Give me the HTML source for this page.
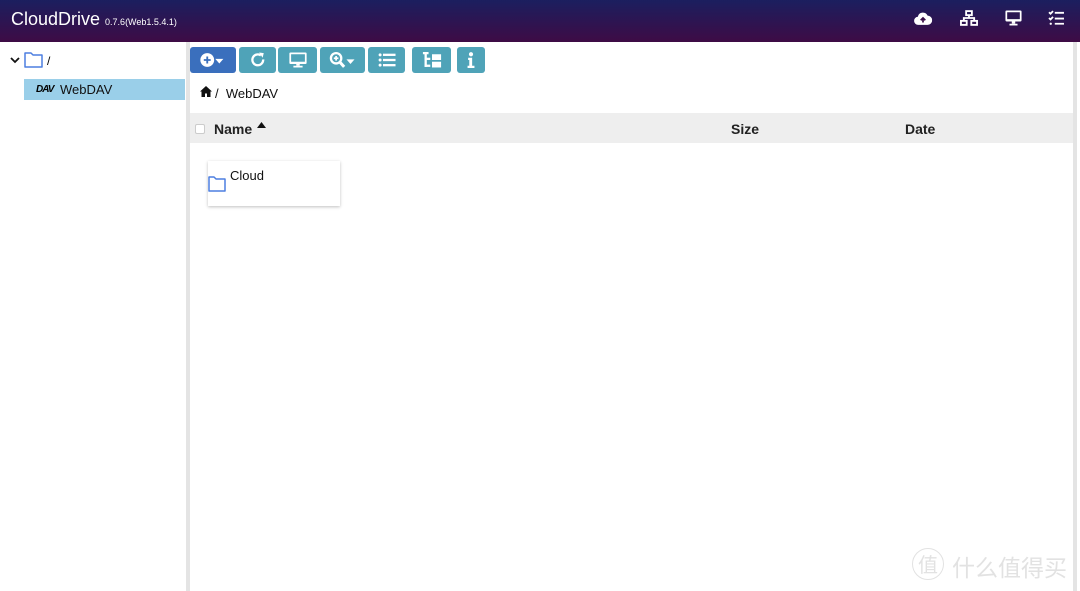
<!DOCTYPE html>
<html><head><meta charset="utf-8"><style>
*{margin:0;padding:0;box-sizing:border-box}
body{width:1080px;height:591px;overflow:hidden;background:#fff;font-family:"Liberation Sans",Arial,sans-serif;position:relative}
.hdr{position:absolute;left:0;top:0;width:1080px;height:42px;background:linear-gradient(#1b1f5f,#3e0b45)}
.title{position:absolute;left:11px;top:9px;color:#fff;font-size:18px}
.title small{font-size:9px}
.side{position:absolute;left:0;top:42px;width:187px;height:549px;background:#fff}
.vline{position:absolute;left:186px;top:42px;width:4px;height:549px;background:#e4e4e4}
.rline{position:absolute;left:1073px;top:42px;width:4px;height:549px;background:#e4e4e4}
.btn{position:absolute;top:47px;height:26px;border-radius:3px;background:#4fa3b8}
.btn svg{position:absolute;left:50%;top:50%;transform:translate(-50%,-50%) scale(1.15)}
.sel{position:absolute;left:24px;top:79px;width:161px;height:21px;background:#9acfe9}
.th{position:absolute;left:190px;top:113px;width:883px;height:30px;background:#eeeeee;font-weight:bold;font-size:14px;color:#222}
.th span{position:absolute;top:8px}
.card{position:absolute;left:208px;top:161px;width:132px;height:45px;background:#fff;box-shadow:0 1px 3px rgba(0,0,0,.25)}
.hi{position:absolute;transform:scale(1.15);transform-origin:center}
</style></head><body>
<div class="hdr">
<div class="title">CloudDrive <small>0.7.6(Web1.5.4.1)</small></div>
<svg class="hi" style="left:915px;top:12px" width="16" height="13" viewBox="0 0 16 13"><path d="M4 12a3.5 3.5 0 0 1-.5-7A4.5 4.5 0 0 1 12 4a3.5 3.5 0 0 1 0 8z" fill="#fff"/><path d="M8 10V6M6 8l2-2 2 2" stroke="#3a1048" stroke-width="1.5" fill="none"/></svg>
<svg class="hi" style="left:961px;top:11px" width="16" height="14" viewBox="0 0 16 14" fill="none" stroke="#fff" stroke-width="1.6"><rect x="5.5" y="1" width="5" height="3.5"/><rect x="1" y="9.5" width="5" height="3.5"/><rect x="10" y="9.5" width="5" height="3.5"/><path d="M8 4.5v2.5M3.5 9.5V7h9v2.5"/></svg>
<svg class="hi" style="left:1006px;top:11px" width="15" height="14" viewBox="0 0 15 14"><rect x="0.5" y="0.5" width="14" height="9.5" rx="1" fill="#fff"/><rect x="2" y="2" width="11" height="6" fill="#2a1550"/><rect x="6" y="10" width="3" height="2" fill="#fff"/><rect x="4" y="12" width="7" height="1.5" fill="#fff"/></svg>
<svg class="hi" style="left:1049px;top:11px" width="15" height="14" viewBox="0 0 15 14" stroke="#fff" stroke-width="1.6" fill="none"><path d="M1 2l1.3 1.3L4.5 1M1 7l1.3 1.3L4.5 6"/><circle cx="2.5" cy="12" r="1" fill="#fff" stroke="none"/><path d="M6 2.5h8M6 7.5h8M6 12h8"/></svg>
</div>
<div class="side"></div>
<div class="vline"></div><div class="rline"></div>
<svg style="position:absolute;left:10px;top:56px" width="10" height="8" viewBox="0 0 10 8"><path d="M1 2l4 4 4-4" stroke="#111" stroke-width="1.8" fill="none"/></svg>
<svg style="position:absolute;left:24px;top:51px" width="19" height="17" viewBox="0 0 19 17"><path d="M1 2h6l2 2h9v12H1z" fill="none" stroke="#4d7fe0" stroke-width="1.5" stroke-linejoin="round"/></svg>
<div style="position:absolute;left:47px;top:54px;font-size:12px">/</div>
<div class="sel"></div>
<div style="position:absolute;left:36px;top:84px;font-size:10px;font-weight:bold;font-style:italic;letter-spacing:-1px">DAV</div>
<div style="position:absolute;left:60px;top:82px;font-size:13px;color:#111">WebDAV</div>

<div class="btn" style="left:190px;width:46px;background:#3a6fbd"><svg width="24" height="14" viewBox="0 0 24 14"><circle cx="7" cy="7" r="6" fill="#fff"/><path d="M7 4v6M4 7h6" stroke="#3a6fbd" stroke-width="1.6"/><path d="M14 6h7l-3.5 4z" fill="#fff"/></svg></div>
<div class="btn" style="left:239px;width:37px"><svg width="14" height="14" viewBox="0 0 14 14"><path d="M11.5 6.5A4.7 4.7 0 1 1 9.5 3" stroke="#fff" stroke-width="2" fill="none"/><path d="M8 0.5l4 .5-1 4z" fill="#fff"/></svg></div>
<div class="btn" style="left:278px;width:39px"><svg width="16" height="14" viewBox="0 0 16 14"><rect x="0.5" y="0.5" width="15" height="10" rx="1" fill="#fff"/><rect x="2" y="2" width="12" height="6.5" fill="#4fa3b8"/><rect x="6.5" y="10" width="3" height="2" fill="#fff"/><rect x="4" y="12" width="8" height="1.5" fill="#fff"/></svg></div>
<div class="btn" style="left:320px;width:45px"><svg width="24" height="15" viewBox="0 0 24 15"><circle cx="6" cy="6" r="4.5" fill="none" stroke="#fff" stroke-width="2"/><path d="M6 4v4M4 6h4" stroke="#fff" stroke-width="1.5"/><path d="M9 9l4 4.5" stroke="#fff" stroke-width="2.6"/><path d="M15 7h7l-3.5 4z" fill="#fff"/></svg></div>
<div class="btn" style="left:368px;width:37px"><svg width="15" height="12" viewBox="0 0 15 12" fill="#fff"><circle cx="1.5" cy="1.5" r="1.3"/><circle cx="1.5" cy="6" r="1.3"/><circle cx="1.5" cy="10.5" r="1.3"/><rect x="4" y="0.5" width="11" height="2"/><rect x="4" y="5" width="11" height="2"/><rect x="4" y="9.5" width="11" height="2"/></svg></div>
<div class="btn" style="left:412px;width:39px"><svg width="16" height="14" viewBox="0 0 16 14" fill="#fff"><rect x="0" y="0" width="5" height="2"/><rect x="1.5" y="0" width="2" height="13"/><rect x="1.5" y="5" width="5" height="2"/><rect x="1.5" y="11" width="5" height="2"/><rect x="8" y="2" width="8" height="5"/><rect x="8" y="8.5" width="8" height="5"/></svg></div>
<div class="btn" style="left:457px;width:28px"><svg width="6" height="14" viewBox="0 0 6 14" fill="#fff"><circle cx="3" cy="2" r="1.8"/><path d="M0.5 5h3.5v7H6v2H0v-2h1.5V7h-1z"/></svg></div>

<svg style="position:absolute;left:200px;top:86px" width="12" height="11" viewBox="0 0 12 11"><path d="M6 0L0 5.5h1.5V11h3.5V7.5h2V11h3.5V5.5H12z" fill="#111"/></svg>
<div style="position:absolute;left:215px;top:86px;font-size:13px;color:#111">/ &nbsp;WebDAV</div>

<div class="th">
<div style="position:absolute;left:5px;top:11px;width:10px;height:10px;border:1px solid #ccc;border-radius:2px;background:#fff"></div>
<span style="left:24px">Name</span>
<svg style="position:absolute;left:67px;top:9px" width="9" height="6" viewBox="0 0 9 6"><path d="M0 6L4.5 0 9 6z" fill="#111"/></svg>
<span style="left:541px">Size</span><span style="left:715px">Date</span>
</div>
<div class="card">
<svg style="position:absolute;left:0;top:14px" width="18" height="17" viewBox="0 0 18 17"><path d="M1 2h5l2 2h9v12H1z" fill="none" stroke="#4d7fe0" stroke-width="1.5" stroke-linejoin="round"/></svg>
<div style="position:absolute;left:22px;top:7px;font-size:13px;color:#111">Cloud</div>
</div>
<div style="position:absolute;left:912px;top:548px;width:32px;height:32px;border:1.5px solid #e2e2e2;border-radius:50%;color:#e2e2e2;font-size:20px;text-align:center;line-height:29px;font-family:'Noto Sans CJK SC',sans-serif">值</div>
<div style="position:absolute;left:952px;top:549px;font-size:23px;color:#e2e2e2;font-family:'Noto Sans CJK SC',sans-serif">什么值得买</div>
</body></html>
